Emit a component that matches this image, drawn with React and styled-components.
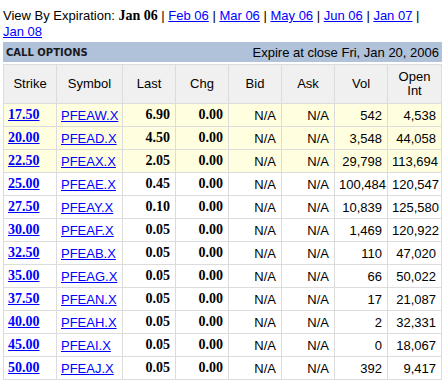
import React from 'react'
import styled, {createGlobalStyle} from 'styled-components'

const GlobalStyle = createGlobalStyle`
  body {
    margin: 0;
    background: #ffffff;
    font-family: "Liberation Sans", Arial, sans-serif;
  }
`

const months = [
  {label: 'Jan 06', current: true},
  {label: 'Feb 06'},
  {label: 'Mar 06'},
  {label: 'May 06'},
  {label: 'Jun 06'},
  {label: 'Jan 07'},
  {label: 'Jan 08'},
]

const rows = [
  ['17.50', 'PFEAW.X', '6.90', '0.00', 'N/A', 'N/A', '542', '4,538', true],
  ['20.00', 'PFEAD.X', '4.50', '0.00', 'N/A', 'N/A', '3,548', '44,058', true],
  ['22.50', 'PFEAX.X', '2.05', '0.00', 'N/A', 'N/A', '29,798', '113,694', true],
  ['25.00', 'PFEAE.X', '0.45', '0.00', 'N/A', 'N/A', '100,484', '120,547'],
  ['27.50', 'PFEAY.X', '0.10', '0.00', 'N/A', 'N/A', '10,839', '125,580'],
  ['30.00', 'PFEAF.X', '0.05', '0.00', 'N/A', 'N/A', '1,469', '120,922'],
  ['32.50', 'PFEAB.X', '0.05', '0.00', 'N/A', 'N/A', '110', '47,020'],
  ['35.00', 'PFEAG.X', '0.05', '0.00', 'N/A', 'N/A', '66', '50,022'],
  ['37.50', 'PFEAN.X', '0.05', '0.00', 'N/A', 'N/A', '17', '21,087'],
  ['40.00', 'PFEAH.X', '0.05', '0.00', 'N/A', 'N/A', '2', '32,331'],
  ['45.00', 'PFEAI.X', '0.05', '0.00', 'N/A', 'N/A', '0', '18,067'],
  ['50.00', 'PFEAJ.X', '0.05', '0.00', 'N/A', 'N/A', '392', '9,417'],
]

export default function App(){
  return (
    <Page>
      <GlobalStyle />
      <Expirations>
        View By Expiration:{' '}
        {months.map((m, i) => (
          <React.Fragment key={m.label}>
            {m.current ? <Current>{m.label}</Current> : <MonthLink href="#">{m.label}</MonthLink>}
            {i < months.length - 1 && ' | '}
          </React.Fragment>
        ))}
      </Expirations>
      <TitleBar>
        <Title>CALL OPTIONS</Title>
        <ExpireNote>Expire at close Fri, Jan 20, 2006</ExpireNote>
      </TitleBar>
      <Table>
        <colgroup>
          <col style={{width: 53}} />
          <col style={{width: 66}} />
          <col style={{width: 53}} />
          <col style={{width: 53}} />
          <col style={{width: 53}} />
          <col style={{width: 53}} />
          <col style={{width: 53}} />
          <col style={{width: 54}} />
        </colgroup>
        <thead>
          <tr>
            <HeadCell>Strike</HeadCell>
            <HeadCell>Symbol</HeadCell>
            <HeadCell>Last</HeadCell>
            <HeadCell>Chg</HeadCell>
            <HeadCell>Bid</HeadCell>
            <HeadCell>Ask</HeadCell>
            <HeadCell>Vol</HeadCell>
            <HeadCell>Open<br />Int</HeadCell>
          </tr>
        </thead>
        <tbody>
          {rows.map(r => (
            <Row key={r[1]} $inMoney={r[8]}>
              <Cell><StrikeLink href="#">{r[0]}</StrikeLink></Cell>
              <Cell><SymbolLink href="#">{r[1]}</SymbolLink></Cell>
              <Cell $right $bold>{r[2]}</Cell>
              <Cell $right $bold>{r[3]}</Cell>
              <Cell $right>{r[4]}</Cell>
              <Cell $right>{r[5]}</Cell>
              <Cell $right>{r[6]}</Cell>
              <Cell $right>{r[7]}</Cell>
            </Row>
          ))}
        </tbody>
      </Table>
    </Page>
  )
}

const Page = styled.div`
  width: 439px;
  padding: 8px 5px 0 3px;
`

const Expirations = styled.div`
  font-size: 13px;
  line-height: 16px;
  color: #000;
`

const Current = styled.b`
  font-family: "Liberation Serif", "Times New Roman", serif;
  font-size: 14px;
`

const MonthLink = styled.a`
  color: #0000ff;
  text-decoration: underline;
`

const TitleBar = styled.div`
  margin-top: 2px;
  height: 20px;
  background: #b0c1da;
  display: flex;
  align-items: center;
  justify-content: space-between;
  padding: 0 3px 0 3px;
`

const Title = styled.span`
  font-family: "DejaVu Sans", Verdana, sans-serif;
  font-weight: bold;
  font-size: 10px;
  color: #1a1a1a;
`

const ExpireNote = styled.span`
  font-size: 13px;
  color: #000;
`

const Table = styled.table`
  margin-top: 2px;
  width: 439px;
  border-collapse: collapse;
  table-layout: fixed;
  border: 1px solid #dcdcdc;
`

const HeadCell = styled.th`
  height: 38px;
  padding: 0;
  background: #f0f0f0;
  border: 1px solid #dcdcdc;
  font-weight: normal;
  font-size: 13px;
  line-height: 14px;
  color: #000;
  text-align: center;
`

const Row = styled.tr`
  background: ${p => (p.$inMoney ? '#ffffe0' : '#ffffff')};
`

const Cell = styled.td`
  height: 22px;
  padding: 0 5px 0 4px;
  border: 1px solid #dcdcdc;
  font-size: 13px;
  color: #000;
  white-space: nowrap;
  text-align: ${p => (p.$right ? 'right' : 'left')};
  font-family: ${p => (p.$bold ? '"Liberation Serif", "Times New Roman", serif' : 'inherit')};
  font-weight: ${p => (p.$bold ? 'bold' : 'normal')};
  font-size: ${p => (p.$bold ? '14px' : '13px')};
`

const StrikeLink = styled.a`
  font-family: "Liberation Serif", "Times New Roman", serif;
  font-weight: bold;
  font-size: 14px;
  color: #0000ff;
  text-decoration: underline;
`

const SymbolLink = styled.a`
  color: #0000ff;
  text-decoration: underline;
`
